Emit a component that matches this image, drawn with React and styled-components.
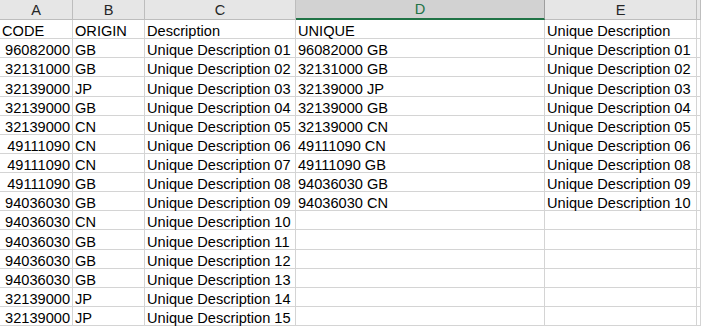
import React from "react";
import styled, { createGlobalStyle } from "styled-components";

const Global = createGlobalStyle`
  html, body { margin: 0; padding: 0; background: #fff; }
  body { font-family: Arial, "Liberation Sans", sans-serif; }
`;

const Sheet = styled.div`
  display: grid;
  grid-template-columns: 73px 72px 151px 249px 152px 1fr;
  grid-template-rows: 20px repeat(16, 19.125px);
  width: 701px;
  height: 327px;
  overflow: hidden;
  font-family: Arial, "Liberation Sans", sans-serif;
  font-size: 14.6px;
  color: #000;
`;

const ColHead = styled.div`
  box-sizing: border-box;
  background: ${(p) => (p.$selected ? "#d2d2d2" : "#e6e6e6")};
  color: ${(p) => (p.$selected ? "#217346" : "#262626")};
  border-right: 1px solid ${(p) => (p.$selected ? "#9e9e9e" : "#bdbdbd")};
  border-bottom: ${(p) => (p.$selected ? "2px solid #217346" : "1px solid #bdbdbd")};
  display: flex;
  align-items: center;
  justify-content: center;
  line-height: 1;
  padding-top: 1px;
`;

const Cell = styled.div`
  box-sizing: border-box;
  border-right: 1px solid #d4d4d4;
  border-bottom: 1px solid #d4d4d4;
  display: flex;
  align-items: flex-end;
  justify-content: ${(p) => (p.$num ? "flex-end" : "flex-start")};
  padding: 0 ${(p) => (p.$num ? "2px" : "0")} 0 ${(p) => (p.$num ? "0" : "2px")};
  white-space: nowrap;
  overflow: visible;
  line-height: 14px;
`;

const data = [
  ["96082000", "GB", "Unique Description 01", "96082000 GB", "Unique Description 01"],
  ["32131000", "GB", "Unique Description 02", "32131000 GB", "Unique Description 02"],
  ["32139000", "JP", "Unique Description 03", "32139000 JP", "Unique Description 03"],
  ["32139000", "GB", "Unique Description 04", "32139000 GB", "Unique Description 04"],
  ["32139000", "CN", "Unique Description 05", "32139000 CN", "Unique Description 05"],
  ["49111090", "CN", "Unique Description 06", "49111090 CN", "Unique Description 06"],
  ["49111090", "CN", "Unique Description 07", "49111090 GB", "Unique Description 08"],
  ["49111090", "GB", "Unique Description 08", "94036030 GB", "Unique Description 09"],
  ["94036030", "GB", "Unique Description 09", "94036030 CN", "Unique Description 10"],
  ["94036030", "CN", "Unique Description 10", "", ""],
  ["94036030", "GB", "Unique Description 11", "", ""],
  ["94036030", "GB", "Unique Description 12", "", ""],
  ["94036030", "GB", "Unique Description 13", "", ""],
  ["32139000", "JP", "Unique Description 14", "", ""],
  ["32139000", "JP", "Unique Description 15", "", ""],
];

const headers = ["A", "B", "C", "D", "E", ""];

export default function App() {
  const rows = [["CODE", "ORIGIN", "Description", "UNIQUE", "Unique Description"], ...data];
  return (
    <>
      <Global />
      <Sheet>
        {headers.map((h) => (
          <ColHead key={"h" + h} $selected={h === "D"}>
            {h}
          </ColHead>
        ))}
        {rows.map((r, i) => (
          <React.Fragment key={i}>
            {r.map((v, j) => (
              <Cell key={j} $num={j === 0 && i > 0}>
                {v}
              </Cell>
            ))}
            <Cell />
          </React.Fragment>
        ))}
      </Sheet>
    </>
  );
}
